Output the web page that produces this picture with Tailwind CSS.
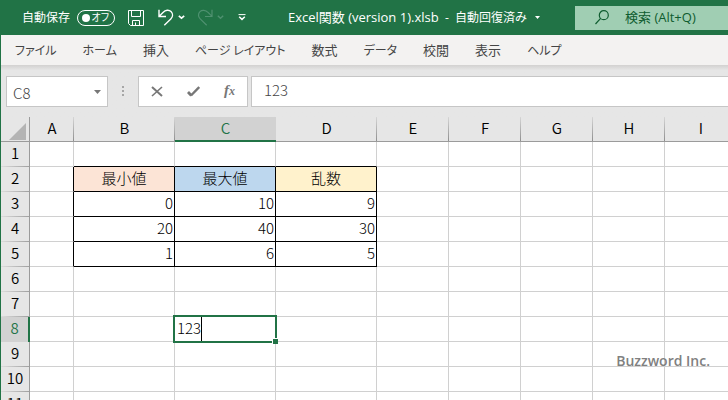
<!DOCTYPE html>
<html lang="ja">

<head>
  <meta charset="UTF-8">
  <meta name="viewport" content="width=device-width, initial-scale=1.0">
  <title>Excel関数 (version 1).xlsb</title>
  <script src="https://cdn.jsdelivr.net/npm/@tailwindcss/browser@4"></script>
</head>

<body class="h-screen overflow-hidden flex flex-col bg-white font-['Noto_Sans_CJK_JP',sans-serif] text-[#444]">
  <!-- Title bar -->
  <header class="flex items-center h-[35px] shrink-0 bg-[#217346] text-white text-xs font-['Open_Sans','Noto_Sans_CJK_JP',sans-serif]">
    <label class="flex items-center gap-[7px] pl-[22px] cursor-pointer">
      自動保存
      <input type="checkbox" class="sr-only">
      <span class="flex items-center justify-between w-[38px] h-4 rounded-full border border-white pl-1 pr-[5px] text-[10px] [font-feature-settings:'palt']">
        <span class="size-2 rounded-full bg-white"></span>オフ
      </span>
    </label>
    <div class="flex items-center pl-[13px]">
      <button aria-label="上書き保存">
        <svg class="size-4" viewBox="0 0 16 16" fill="none" stroke="currentColor">
          <path d="M.5.5h15v15h-13l-2-2zM3.500.5v6h9v-6M4.500 15.500v-5h7v5M7.500 15.500v-3" />
        </svg>
      </button>
      <button aria-label="元に戻す" class="flex items-center gap-1 ml-[14px]">
        <svg class="w-4 h-[17px]" viewBox="0 0 16 17" fill="none" stroke="currentColor" stroke-width="1.400">
          <path d="M1 .8v6.700h7M1.200 7.200L5 3.400C7.500.9 11 .6 13 2.600s2.100 5-.2 7.300L6.300 16.200" />
        </svg>
        <svg class="w-[7px] h-[5px]" viewBox="0 0 7 5" fill="none" stroke="currentColor" stroke-width="1.600">
          <path d="M.8.8l2.700 2.400L6.200.8" />
        </svg>
      </button>
      <button aria-label="やり直し" class="flex items-center gap-1 ml-3 text-[#4f9170]">
        <svg class="w-4 h-[17px]" viewBox="0 0 16 17" fill="none" stroke="currentColor" stroke-width="1.200">
          <path d="M15 .8v6.700H8M14.800 7.200L11 3.400C8.500.9 5 .6 3 2.600s-2.100 5 .2 7.300L9.700 16.200" />
        </svg>
        <svg class="w-[7px] h-[5px]" viewBox="0 0 7 5" fill="none" stroke="currentColor" stroke-width="1.400">
          <path d="M.8.8l2.700 2.400L6.200.8" />
        </svg>
      </button>
      <button aria-label="クイック アクセス ツール バーのユーザー設定" class="ml-[14px]">
        <svg class="w-2 h-[7px]" viewBox="0 0 8 7" fill="none" stroke="currentColor">
          <path d="M.5.6h7" />
          <path d="M1.200 2.800L4 5.400l2.800-2.600" stroke-width="1.500" />
        </svg>
      </button>
    </div>
    <button class="flex items-center gap-2 ml-auto mr-[35px] whitespace-nowrap">
      <span><span class="text-[13px]">Excel関数 (version 1).xlsb</span>&nbsp; -&nbsp; 自動回復済み</span>
      <svg class="w-[5px] h-[3px]" viewBox="0 0 5 3" fill="currentColor">
        <path d="M0 0h5L2.500 3z" />
      </svg>
    </button>
    <label class="flex items-center w-[153px] h-6 shrink-0 pl-5 gap-4 bg-[#a0ceb3] text-[#0e5c2f]">
      <svg class="w-[14px] h-[15px] shrink-0" viewBox="0 0 14 15" fill="none" stroke="currentColor" stroke-width="1.200">
        <circle cx="8.800" cy="5.200" r="4.500" />
        <path d="M5.600 8.400L.5 14" />
      </svg>
      <input type="search" aria-label="検索" placeholder="検索 (Alt+Q)" class="w-full min-w-0 text-[13px] outline-none placeholder:text-[#0e5c2f]">
    </label>
  </header>

  <div class="flex-1 min-h-0 flex flex-col border-l border-[#217346]">
    <!-- Ribbon tabs -->
    <nav class="flex items-center h-[30px] shrink-0 gap-[26px] pl-[14px] bg-[#f3f2f1] text-xs whitespace-nowrap [font-feature-settings:'palt']">
      <button>ファイル</button>
      <button>ホーム</button>
      <button class="text-[13px]">挿入</button>
      <button>ページ レイアウト</button>
      <button class="text-[13px]">数式</button>
      <button>データ</button>
      <button class="text-[13px]">校閲</button>
      <button class="text-[13px]">表示</button>
      <button>ヘルプ</button>
    </nav>

    <!-- Formula bar -->
    <div class="flex h-[52px] shrink-0 pt-[11px] pb-[10px] pl-[5px] bg-[#e6e6e6] bg-linear-to-b from-[#d2d1d0] to-[#e6e6e6] to-10%">
      <div class="flex items-center w-[102px] pl-1.5 pr-1.5 bg-white border border-[#c6c6c6]">
        <input aria-label="名前ボックス" value="C8" class="w-full min-w-0 pt-1 text-[15px] font-light outline-none">
        <button aria-label="名前の一覧">
          <svg class="w-[7px] h-1" viewBox="0 0 7 4" fill="#777">
            <path d="M0 0h7L3.500 4z" />
          </svg>
        </button>
      </div>
      <svg class="w-[30px] h-[31px]" viewBox="0 0 30 31" fill="#a6a6a6">
        <path d="M14 10h2v2h-2zM14 14h2v2h-2zM14 18h2v2h-2z" />
      </svg>
      <div class="flex items-center justify-between w-[110px] px-3 bg-white border border-[#c6c6c6] text-[#777]">
        <button aria-label="キャンセル">
          <svg class="w-3 h-[11px]" viewBox="0 0 12 11" fill="none" stroke="currentColor">
            <path d="M1 1l10 9" stroke-width="2" />
            <path d="M11 1L1 10" stroke-width="1.600" />
          </svg>
        </button>
        <button aria-label="入力">
          <svg class="w-[13px] h-[11px]" viewBox="0 0 13 11" fill="none" stroke="currentColor">
            <path d="M1 6l3.300 3.500" stroke-width="2.800" />
            <path d="M4 9.500L12.200 1" stroke-width="2.400" />
          </svg>
        </button>
        <button aria-label="関数の挿入" class="font-['Liberation_Serif',serif] italic font-bold text-[15px] leading-4 pb-0.5">f<span class="text-xs">x</span></button>
      </div>
      <input aria-label="数式バー" value="123" class="flex-1 min-w-0 ml-[3px] pl-3 pb-0.5 bg-white border border-r-0 border-[#c6c6c6] text-[15px] font-light outline-none">
    </div>

    <!-- Worksheet -->
    <main class="relative flex-1 min-h-0 overflow-hidden">
      <table class="table-fixed w-[736px] border-separate border-spacing-0 text-[15px] leading-[22px] text-black">
        <colgroup>
          <col class="w-[29px]">
          <col class="w-[44px]">
          <col class="w-[101px]">
          <col class="w-[101px]">
          <col class="w-[101px]">
          <col class="w-[72px]">
          <col class="w-[72px]">
          <col class="w-[72px]">
          <col class="w-[72px]">
          <col class="w-[72px]">
        </colgroup>
        <thead>
          <tr id="columnHeads"></tr>
        </thead>
        <tbody id="rows"></tbody>
      </table>
      <p class="absolute right-[18px] bottom-[27px] text-sm leading-6 font-semibold font-['Open_Sans',sans-serif] text-[#808080]">Buzzword Inc.</p>
    </main>
  </div>

  <script>
    const columns = ["A", "B", "C", "D", "E", "F", "G", "H", "I"];
    const rowCount = 11;
    const active = "C8";

    const values = {
      B2: "最小値", C2: "最大値", D2: "乱数",
      B3: "0", C3: "10", D3: "9",
      B4: "20", C4: "40", D4: "30",
      B5: "1", C5: "6", D5: "5",
    };
    const fills = { B2: "bg-[#fce4d6]", C2: "bg-[#bdd7ee]", D2: "bg-[#fff2cc]" };

    const headClass = "h-[25px] p-0 align-top font-[350] border-b border-b-[#9b9b9b] bg-[#e6e6e6] bg-[linear-gradient(to_bottom,#d6d6d6,#8f8f8f)] bg-[length:1px_100%] bg-right bg-no-repeat";
    const activeHeadClass = "h-[25px] p-0 align-top font-[350] border-b-2 border-b-[#217346] bg-[#d2d2d2] text-[#217346]";
    const rowHeadClass = "h-[25px] p-0 align-top font-[350] border-r border-r-[#9b9b9b] bg-[#e6e6e6] bg-[linear-gradient(to_right,#dcdcdc,#a0a0a0)] bg-[length:100%_1px] bg-bottom bg-no-repeat";
    const activeRowHeadClass = "h-[25px] p-0 align-top font-[350] border-r-2 border-r-[#217346] bg-[#d2d2d2] text-[#217346]";

    const editor = `
      <div class="absolute z-10 -inset-0.5 flex items-stretch pl-0.5 bg-white border-2 border-[#217346]">
        <input aria-label="C8" value="123" class="[field-sizing:content] pb-0.5 font-light outline-none">
        <span class="w-px bg-black"></span>
        <span class="absolute -right-[3px] -bottom-[3px] size-[6px] bg-[#217346] border-t border-l border-white"></span>
      </div>`;

    document.getElementById("columnHeads").innerHTML =
      `<th class="h-[25px] p-0 border-r border-b border-[#9b9b9b] bg-[#e6e6e6]">
        <svg class="ml-2 mt-1 w-[17px] h-[17px]" viewBox="0 0 17 17" fill="#b4b4b4"><path d="M17 0v17H0z" /></svg>
      </th>` +
      columns.map((c) => `<th scope="col" class="${c === active[0] ? activeHeadClass : headClass}">${c}</th>`).join("");

    // The data block B2:D5 is ruled in black. Each cell draws its right and bottom edge only.
    const rightEdge = (col, row) => row >= 2 && row <= 5 && col <= 3 ? "border-r-black" : "border-r-[#d0d0d0]";
    const bottomEdge = (col, row) => row <= 5 && col >= 1 && col <= 3 ? "border-b-black" : "border-b-[#d0d0d0]";

    let html = "";
    for (let row = 1; row <= rowCount; row++) {
      const isActiveRow = String(row) === active.slice(1);
      html += `<tr><th scope="row" class="${isActiveRow ? activeRowHeadClass : rowHeadClass}">${row}</th>`;
      columns.forEach((c, col) => {
        const name = c + row;
        const align = row === 2 ? "text-center" : "text-right";
        html += `<td class="relative h-[25px] py-0 px-px align-top font-light border-r border-b ${rightEdge(col, row)} ${bottomEdge(col, row)} ${align} ${fills[name] || ""}">${name === active ? editor : values[name] || ""}</td>`;
      });
      html += "</tr>";
    }
    document.getElementById("rows").innerHTML = html;
  </script>
</body>

</html>
